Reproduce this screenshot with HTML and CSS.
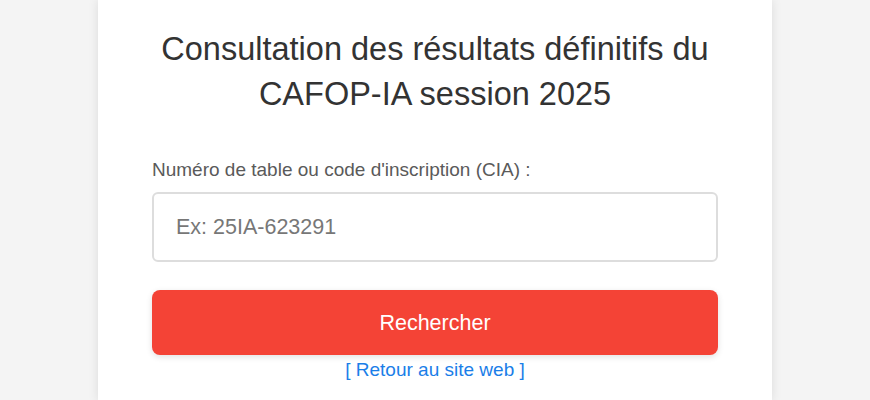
FILE: index.html
```html
<!DOCTYPE html>
<html lang="fr">
<head>
    <meta charset="utf-8">
    <title>Résultats CAFOP-IA 2025</title>
    <link rel="stylesheet" href="styles.css">
</head>
<body>
    <div class="container">
        <h1>Consultation des résultats définitifs du CAFOP-IA session 2025</h1>

        <form class="search-form" onsubmit="return false;">
            <label for="cia">Numéro de table ou code d'inscription (CIA) :</label>
            <input type="text" id="cia" placeholder="Ex: 25IA-623291">
            <button type="submit" class="search-btn">Rechercher</button>
        </form>

        <a href="#" class="back-link">[ Retour au site web ]</a>
    </div>
</body>
</html>
```

FILE: styles.css
```css
body {
    font-family: "Liberation Sans", Arial, sans-serif;
    margin: 0;
    background-color: #f4f4f4;
}
.container {
    width: 566px;
    margin: 0 auto;
    padding: 27px 54px 20px;
    background-color: white;
    box-shadow: 0 0 10px rgba(0,0,0,0.1);
    text-align: center;
}
h1 {
    font-size: 32.5px;
    font-weight: normal;
    line-height: 45px;
    color: #333;
    margin: 0 0 42px;
}
.search-form {
    text-align: left;
}
label {
    display: block;
    font-size: 19px;
    line-height: 22px;
    color: #5a5a5a;
    margin-bottom: 11px;
}
input {
    display: block;
    box-sizing: border-box;
    width: 100%;
    height: 70px;
    padding: 0 22px;
    font-family: inherit;
    font-size: 21.5px;
    border: 2px solid #ddd;
    border-radius: 6px;
    margin-bottom: 28px;
}
input::placeholder {
    color: #777;
}
.search-btn {
    display: block;
    width: 100%;
    height: 65px;
    padding-top: 3px;
    font-family: inherit;
    font-size: 21.5px;
    color: white;
    background-color: #f44336;
    border: none;
    border-radius: 8px;
    box-shadow: 0 2px 6px rgba(0,0,0,0.12);
    cursor: pointer;
}
.back-link {
    display: inline-block;
    margin-top: 4px;
    font-size: 19px;
    line-height: 22px;
    color: #1a7ee8;
    text-decoration: none;
}
```
